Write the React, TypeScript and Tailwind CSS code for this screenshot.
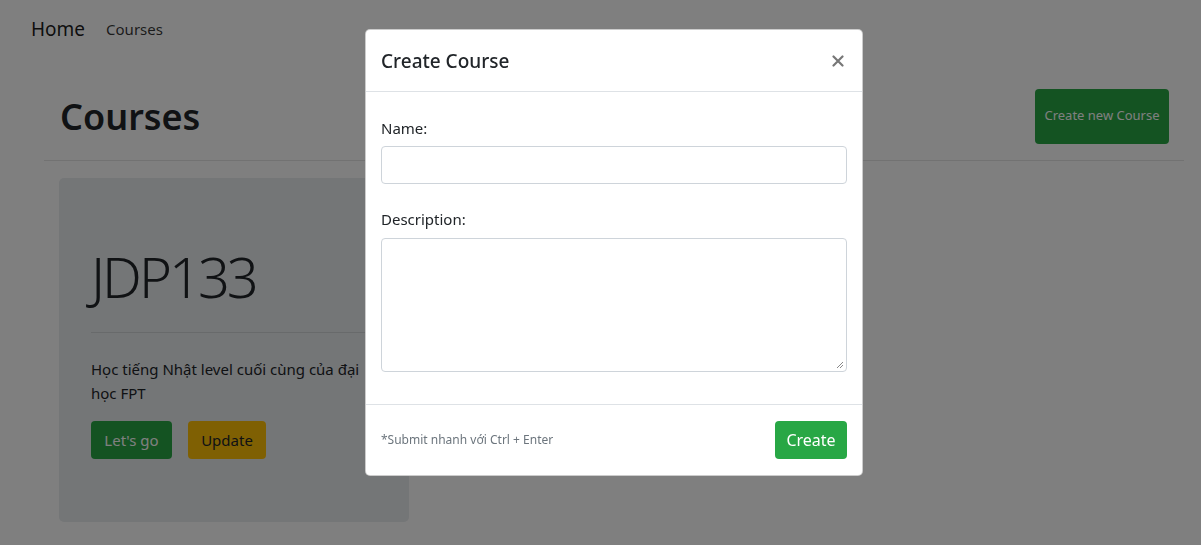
export default function App() {
  const font = { fontFamily: '"Noto Sans", "Open Sans", sans-serif' };
  return (
    <div className="relative h-[545px] w-full overflow-hidden bg-white text-[#212529]" style={font}>
      {/* Navbar */}
      <nav className="flex h-[58px] items-center gap-[21px] px-[31px]">
        <span className="text-[19px] leading-[30px] text-black/90">Home</span>
        <span className="text-[15px] leading-[30px] text-black/80">Courses</span>
      </nav>

      {/* Page header */}
      <div className="ml-[44px] mr-[17px] mt-[14px] flex h-[89px] items-center justify-between border-b border-black/10 pl-[16px] pr-[15px]">
        <h1 className="pt-[1px] text-[36px] font-semibold leading-none">Courses</h1>
        <button className="h-[55px] w-[134px] rounded-[4px] bg-[#28a745] text-[13px] text-white">
          Create new Course
        </button>
      </div>

      {/* Course card */}
      <div className="ml-[59px] mt-[17px] h-[344px] w-[350px] rounded-[5px] bg-[#e9ecef] px-[32px] pt-[62px]">
        <div className="text-[56px] font-light leading-[72px] tracking-[-3px]">JDP133</div>
        <div className="mt-[20px] border-t border-black/10" />
        <p className="mt-[24px] text-[15px] leading-[24px]">
          Học tiếng Nhật level cuối cùng của đại học FPT
        </p>
        <div className="mt-[16px] flex gap-[16px]">
          <button className="h-[38px] w-[81px] rounded-[4px] bg-[#28a745] text-[15px] text-white">Let's go</button>
          <button className="h-[38px] w-[78px] rounded-[4px] bg-[#ffc107] text-[15px] text-[#212529]">Update</button>
        </div>
      </div>

      {/* Backdrop */}
      <div className="fixed inset-0 bg-black/50" />

      {/* Modal */}
      <div className="absolute left-[365px] top-[29px] w-[498px] rounded-[5px] border border-black/20 bg-white">
        <div className="flex h-[62px] items-center justify-between border-b border-[#dee2e6] px-[15px]">
          <h5 className="text-[19px] font-medium leading-[30px]">Create Course</h5>
          <svg className="mr-[3px]" width="12" height="12" viewBox="0 0 12 12">
            <path d="M1.5 1.5L10.5 10.5M10.5 1.5L1.5 10.5" stroke="#777" strokeWidth="2.2" strokeLinecap="round" />
          </svg>
        </div>
        <div className="h-[312px] px-[15px] pt-[24px]">
          <label className="block text-[15px] leading-[24px]">Name:</label>
          <div className="mt-[6px] h-[38px] w-full rounded-[4px] border border-[#ced4da]" />
          <label className="mt-[23px] block text-[15px] leading-[24px]">Description:</label>
          <div className="relative mt-[7px] h-[134px] w-full rounded-[4px] border border-[#ced4da]">
            <svg className="absolute bottom-[2px] right-[2px]" width="8" height="8" viewBox="0 0 8 8">
              <path d="M7 1L1 7M7 4L4 7" stroke="#888" strokeWidth="1" />
            </svg>
          </div>
        </div>
        <div className="flex h-[71px] items-center justify-between border-t border-[#dee2e6] px-[15px]">
          <small className="text-[12px] text-[#6c757d]">*Submit nhanh với Ctrl + Enter</small>
          <button className="h-[38px] w-[72px] rounded-[4px] bg-[#28a745] text-[16px] text-white">Create</button>
        </div>
      </div>
    </div>
  );
}
